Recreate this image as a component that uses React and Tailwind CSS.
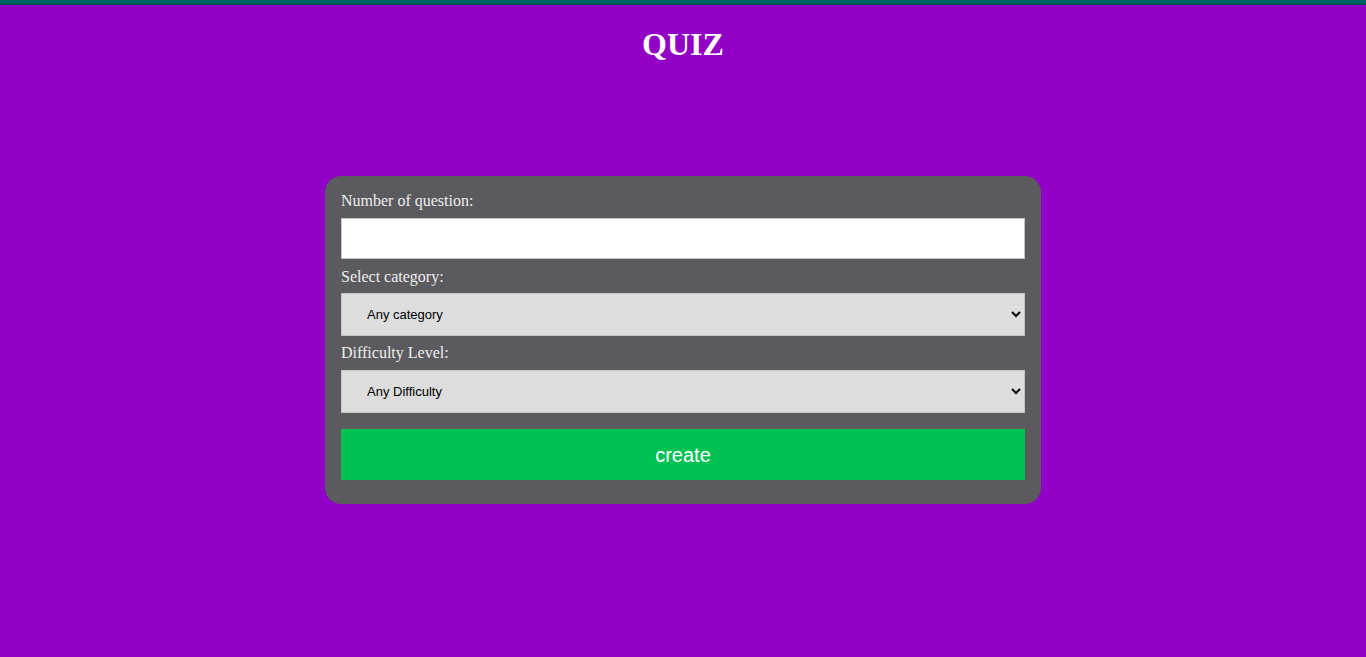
export default function App() {
  return (
    <div className="min-h-screen bg-[#9100c4]">
      <div className="h-[4px] bg-[#005f63]" />
      <div className="h-[1px] bg-[#00474f]" />
      <h1 className="mt-[21px] text-center font-['Liberation_Serif',serif] text-[32px] font-bold leading-[37px] text-white">
        QUIZ
      </h1>
      <div className="mx-auto mt-[113px] flex w-[716px] flex-col rounded-2xl bg-[#5b5a5f] px-4 pb-6 pt-[16px] font-['Liberation_Serif',serif] text-[16px] text-[#eeeeee]">
        <label className="mb-[8px] leading-[18px]">Number of question:</label>
        <input
          type="number"
          className="h-[41px] border border-[#c4c4c4] bg-white px-2 text-black outline-none"
        />
        <label className="mb-[7px] mt-[9px] leading-[18px]">Select category:</label>
        <select className="h-[43px] border border-[#c4c4c4] bg-[#dddddd] px-[21px] font-['Liberation_Sans',sans-serif] text-[13px] text-black">
          <option>Any category</option>
        </select>
        <label className="mb-[8px] mt-[8px] leading-[18px]">Difficulty Level:</label>
        <select className="h-[43px] border border-[#c4c4c4] bg-[#dddddd] px-[21px] font-['Liberation_Sans',sans-serif] text-[13px] text-black">
          <option>Any Difficulty</option>
        </select>
        <button
          type="button"
          className="mt-4 h-[51px] bg-[#00c254] font-['Liberation_Sans',sans-serif] text-[20px] text-white"
        >
          create
        </button>
      </div>
    </div>
  )
}
